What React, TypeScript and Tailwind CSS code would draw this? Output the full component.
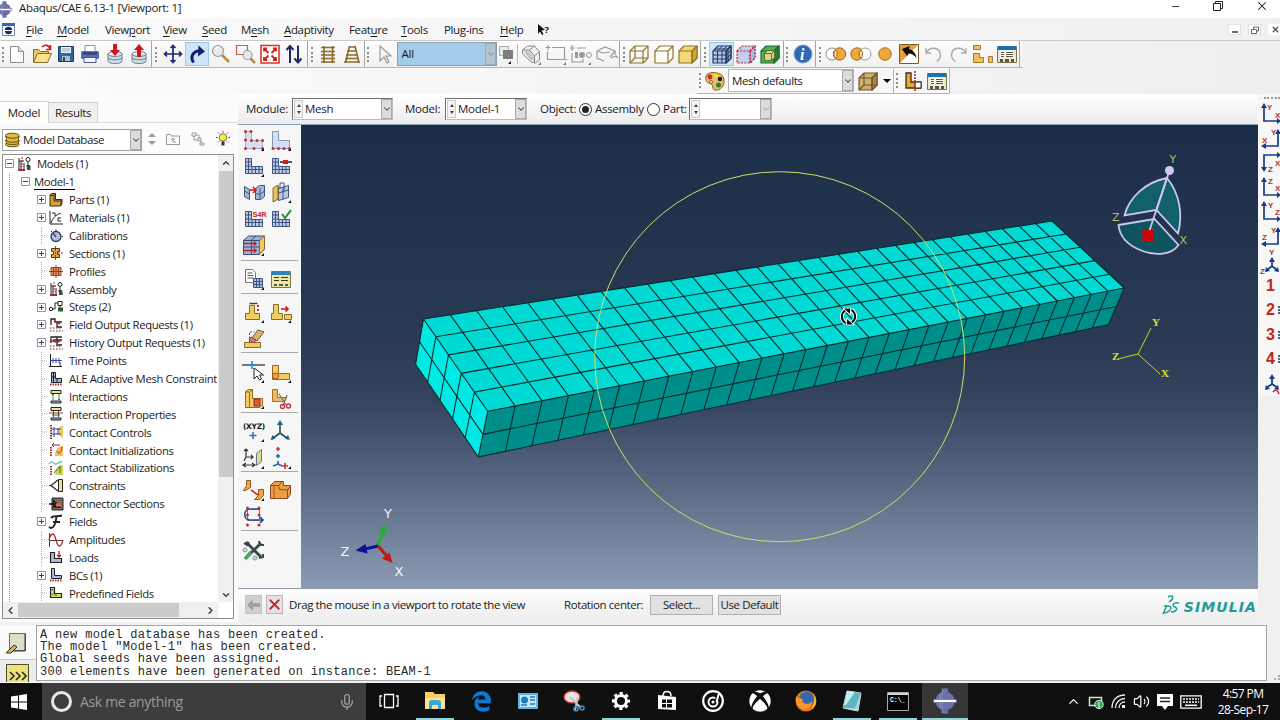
import { ChevronDown, ChevronLeft, ChevronRight, ChevronUp, Mic, Minus, Volume2, X } from "lucide-react";
import type { ReactNode } from "react";
import { FaEdgeLegacy, FaXbox } from "react-icons/fa";

interface IconProps {
  children: ReactNode;
  height?: number;
  width?: number;
}

const Icon: React.FC<IconProps> = ({ children, height = 24, width = 24 }) => (
  <svg className="shrink-0 overflow-visible" fill="none" height={height} viewBox={`0 0 ${width} ${height}`} width={width}>
    {children}
  </svg>
);

const Corner = () => <path d="M22 20v3h-3z" fill="#111" />;

interface CubeProps {
  fill?: string;
  inner?: boolean;
  side?: string;
  stroke: string;
  dash?: string;
}

const Cube: React.FC<CubeProps> = ({ dash, fill = "none", inner, side, stroke }) => (
  <g stroke={stroke} strokeDasharray={dash} strokeLinejoin="round" strokeWidth="1.2">
    <path d="M3 9l5-5h13v12l-5 5H3z" fill={fill} />
    {side && <path d="M16 9l5-5v12l-5 5z" fill={side} />}
    <path d="M3 9h13v12M16 9l5-5" />
    {inner && <path d="M8 4v12h13M8 16l-5 5" />}
  </g>
);

const TableIcon = () => (
  <>
    <path d="M2.500 4.500h19v16h-19z" fill="#efe9c4" stroke="#77744f" />
    <path d="M3 4h18v4H3z" fill="#1a70b0" />
    <path d="M5 8.500h14v7H5z" fill="#fbfaf0" />
    <path d="M6 10.500h3m2 0h7m-12 2h3m2 0h7m-12 2h3m2 0h7" stroke="#555" />
    <path d="M5 17h3v3H5zm5 0h4v3h-4zm6 0h3v3h-3z" fill="#555" />
  </>
);

const Disk: React.FC<{ up?: boolean }> = ({ up }) => (
  <>
    <path d="M5 12v7c0 3.500 14 3.500 14 0v-7z" fill="#cfdbe4" stroke="#6d8291" />
    <ellipse cx="12" cy="12" fill="#e3eaf0" rx="7" ry="2.500" stroke="#6d8291" />
    <path d="M5 15.500c0 3 14 3 14 0" stroke="#6d8291" />
    <path d={up ? "M12 2l5 6h-3v7h-4V8H7z" : "M10 2h4v6h3l-5 6-5-6h3z"} fill="#d2141e" />
  </>
);

const Bracket: React.FC<{ d: string }> = ({ d }) => <path d={d} stroke="#9a9a9a" strokeWidth="1.200" />;

const fileIcons: ReactNode[] = [
  <>
    <path d="M5.500 4.500h8l5 5v11h-13z" fill="#fdfdfd" stroke="#8b8b8b" />
    <path d="M13.500 4.500v5h5" fill="#e3e3e3" stroke="#8b8b8b" />
  </>,
  <>
    <path d="M3.500 20V7.500h5l2 2h8V12" fill="#e7c765" stroke="#8a6d25" />
    <path d="M3.500 20.500l4-9h14l-4 9z" fill="#fbe08f" stroke="#8a6d25" />
    <path d="M12 5c3-3 7-2 8 2M20.500 3v4.500H16" stroke="#cc2018" strokeWidth="1.700" />
  </>,
  <>
    <path d="M4.500 4.500h15v15h-15z" fill="#33659a" stroke="#1c3f66" />
    <path d="M7 5h10v6H7z" fill="#eef4f8" />
    <path d="M8 14h8v5H8z" fill="#aebfcb" />
    <path d="M9 15h2v4H9z" fill="#27486b" />
    <path d="M8 7h8M8 9h8" stroke="#90a6b8" />
  </>,
  <>
    <path d="M7 3.500h10V10H7z" fill="#fff" stroke="#8b93b0" />
    <rect fill="#5b6cac" height="8" rx="1.500" width="18" x="3" y="9" />
    <path d="M6 15.500h12v5H6z" fill="#f4f4fa" stroke="#4f5b8c" />
    <path d="M5 11.500h14" stroke="#2d3b74" strokeWidth="2" />
  </>,
  <Disk />,
  <Disk up />,
];

const viewIcons: ReactNode[] = [
  <path d="M12 3.500v17M3.500 12h17M9.500 6L12 3.500 14.500 6M9.500 18l2.500 2.500 2.500-2.500M6 9.500L3.500 12 6 14.500M18 9.500l2.500 2.500-2.500 2.500" stroke="#1c2a78" strokeWidth="1.700" />,
  <>
    <path d="M8.500 20.500C4.500 14 9 8.500 15 9" stroke="#14206a" strokeWidth="3" />
    <path d="M13.500 3.500l6.500 6-7 5z" fill="#14206a" />
  </>,
  <>
    <path d="M13 13l7 7" stroke="#b98a3d" strokeWidth="2.500" />
    <circle cx="9" cy="9" fill="#e9e9e9" r="5.500" stroke="#9a9a9a" strokeWidth="1.200" />
    <path d="M6 8c.5-1.800 2-2.500 3.500-2.500" stroke="#fff" strokeWidth="1.500" />
  </>,
  <>
    <path d="M2.500 3.500h11v9h-11z" stroke="#cf5a50" strokeWidth="1.200" />
    <path d="M16 16l5 5" stroke="#b98a3d" strokeWidth="2.500" />
    <circle cx="13.500" cy="13" fill="#e9e9e9" r="4.500" stroke="#9a9a9a" strokeWidth="1.200" />
  </>,
  <>
    <path d="M3 3.500h18v17.500H3z" fill="#fff" stroke="#d03a2c" strokeWidth="1.600" />
    <path d="M6 9.500V6.500H9M15 6.500h3v3M6 15v3H9M15 18h3v-3M6.500 7l4 4M17.500 7l-4 4M6.500 17.500l4-4M17.500 17.500l-4-4" stroke="#cc2418" strokeWidth="1.800" />
  </>,
  <path d="M8 21V4.500M4.500 8L8 4l3.500 4M16 3.500V20M12.500 16.500l3.500 4 3.500-4" stroke="#1c2a68" strokeWidth="2" />,
];

const ladderIcons: ReactNode[] = [
  <path d="M8 4v17M16.500 4v17M5 5.500h14M5 9.500h14M5 13h14M5 16.500h14M5 20h14" stroke="#8b6c2b" strokeWidth="1.700" />,
  <path d="M9.500 4L5.500 21M15 4l4 17M8.500 5h7.500M7 9h10M6 13h12M5 16.500h14M4 20h16" stroke="#8b6c2b" strokeWidth="1.600" />,
];

const selectIcons: ReactNode[] = [
  <>
    <path d="M3.500 8l5-4h7l5 6v8l-4 3-4-1-9-8z" fill="#f0f0f0" stroke="#888" />
    <path d="M3.500 8h7l5 6v7M10.500 8l5-4M15.500 14l5-4M6 10l7 8" stroke="#888" />
    <path d="M5 9h5l5 6v4z" fill="#c9c9c9" />
  </>,
  <Bracket d="M4 3v5M1.500 5.500h5M8 5.500h12.500v12H3.500v-8M18 17.500h5" />,
  <>
    <Bracket d="M3 3v6M1 6h5M8 6h9M3 11v9h11v-3" />
    <path d="M6 10h3v6H6zM10 13a3 3 0 106 0 3 3 0 10-6 0" fill="#9a9a9a" />
    <circle cx="20" cy="13" r="2.500" stroke="#9a9a9a" />
  </>,
  <Bracket d="M9 19l-7-3V9l8-4 10 4-5 6M20 9v4M2 9l6 2 7-1M16 16l5-2 2 2" />,
];

const renderIcons: ReactNode[] = [
  <Cube inner stroke="#92752e" />,
  <Cube fill="#fffdf7" stroke="#92752e" />,
  <Cube fill="#f5d775" side="#d8a726" stroke="#92752e" />,
];

const meshIcons: ReactNode[] = [
  <>
    <Cube fill="#b3c7e8" side="#8fa8d1" stroke="#28395f" />
    <path d="M7.500 9v12M12 9v12M3 13h13l5-5M3 17h13l5-5M7.500 9l5-5M12 9l5-5M5 7h13v12" stroke="#28395f" />
  </>,
  <Cube dash="2 1.300" fill="#c3cdec" side="#aab8df" stroke="#c22334" />,
  <>
    <Cube fill="#49b251" side="#267e31" stroke="#1f6b2b" />
    <path d="M6.500 11.500h7v7h-7zM6.500 11.500l3-3h7v7l-3 3" fill="#dfd489" stroke="#5b6d2d" />
    <path d="M13.500 11.500v7M13.500 11.500l3-3" stroke="#5b6d2d" />
  </>,
];

const displayIcons: ReactNode[] = [
  <>
    <circle cx="8" cy="12" fill="#fff" r="6" stroke="#888" />
    <circle cx="15.500" cy="12" fill="#eda73a" r="6.200" stroke="#9c6c1c" />
    <path d="M11.500 7.500a7 7 0 010 9 7 7 0 010-9" fill="#fbe5bd" stroke="#9c6c1c" />
  </>,
  <>
    <circle cx="8" cy="12" fill="#eda73a" r="6.200" stroke="#9c6c1c" />
    <circle cx="16" cy="12" fill="#fff" r="6" stroke="#999" />
    <path d="M12 7.500a7 7 0 010 9 7 7 0 010-9" fill="#fbe5bd" stroke="#9c6c1c" />
  </>,
  <circle cx="12" cy="12" fill="#eda73a" r="6.300" stroke="#a9741c" />,
  <>
    <path d="M2.500 2.500h19v19h-19z" fill="#fff" stroke="#7a5a1f" />
    <path d="M3 3h18L3 21z" fill="#e3a03a" />
    <path d="M5 7l7.500-3-.500 3c4 1 7 4.500 7.500 9-2.500-3-4.500-4.500-8-4.500L10 14z" fill="#080808" />
  </>,
  <path d="M4 6v5h5M4.500 10.500C8 4 18 5 18.500 13c0 3-1.500 5-4 6.500" stroke="#aaa" strokeWidth="1.400" />,
  <path d="M20 6v5h-5M19.500 10.500C16 4 6 5 5.500 13c0 3 1.500 5 4 6.500" stroke="#aaa" strokeWidth="1.400" />,
  <path d="M3.500 3.500h7v4h-7zM3.500 11.500h6v4h4v5h-10zM18.500 14.500h4v6h-4z" fill="#f2bd55" stroke="#a57a2b" />,
  <TableIcon />,
];

const Grip: React.FC<{ width: string }> = ({ width }) => (
  <div className={`flex h-full items-center justify-center ${width}`}>
    <div className="h-[15px] border-l-2 border-dotted border-[#8c8c8c]" />
  </div>
);

interface ToolGroupProps {
  active?: number;
  grip: string;
  icons: ReactNode[];
}

const ToolGroup: React.FC<ToolGroupProps> = ({ active, grip, icons }) => (
  <div className="flex h-full items-center border-r border-[#a6a6a6]">
    <Grip width={grip} />
    {icons.map((icon, i) => (
      <div
        className={`flex h-6 w-[24.4px] items-center justify-center ${active === i ? "border border-[#9bcbee] bg-[#cbe6f8]" : ""}`}
        key={i}
      >
        <Icon>{icon}</Icon>
      </div>
    ))}
  </div>
);

const ComboArrow: React.FC<{ muted?: boolean }> = ({ muted }) => (
  <div className="flex h-full w-[11px] shrink-0 items-center justify-center border border-[#a9a9a9] bg-[#dcdcdc]">
    <ChevronDown className={muted ? "shrink-0 text-[#aaa]" : "shrink-0 text-[#444]"} size={10} strokeWidth={2.5} />
  </div>
);

interface SpinComboProps {
  muted?: boolean;
  value: string;
  width: string;
}

const SpinCombo: React.FC<SpinComboProps> = ({ muted, value, width }) => (
  <div className={`flex h-[22px] items-center border border-[#6e6e6e] border-r-[#bbb] border-b-[#bbb] bg-white ${width}`}>
    <div className="ml-px flex h-[18px] w-[9px] flex-col items-center justify-between border border-[#ccc] bg-[#f3f3f3] py-[3px]">
      <div className="border-x-[2.5px] border-b-[3px] border-x-transparent border-b-[#444]" />
      <div className="border-x-[2.5px] border-t-[3px] border-x-transparent border-t-[#444]" />
    </div>
    <span className="grow pl-[2px]">{value}</span>
    <ComboArrow muted={muted} />
  </div>
);

const menus = [
  { label: "File", mark: 0, width: "w-[31px]" },
  { label: "Model", mark: 0, width: "w-[48px]" },
  { label: "Viewport", mark: 4, width: "w-[58px]" },
  { label: "View", mark: 0, width: "w-[39px]" },
  { label: "Seed", mark: 0, width: "w-[39px]" },
  { label: "Mesh", mark: 1, width: "w-[43px]" },
  { label: "Adaptivity", mark: 0, width: "w-[65px]" },
  { label: "Feature", mark: 4, width: "w-[52px]" },
  { label: "Tools", mark: 0, width: "w-[43px]" },
  { label: "Plug-ins", mark: -1, width: "w-[56px]" },
  { label: "Help", mark: 0, width: "w-[38px]" },
];

const AbaqusMark: React.FC<{ size: number }> = ({ size }) => (
  <svg fill="none" height={size} viewBox="0 0 24 24" width={size}>
    <path d="M9 1c0-1 6-1 6 0v3c3 1 5 3 5.500 6l2.500.500v3l-2.500.500c-.500 3-2.500 5-5.500 6v3c0 1-6 1-6 0v-3c-3-1-5-3-5.500-6L1 13.500v-3l2.500-.500C4 7 6 5 9 4z" fill="#6c70a8" />
    <path d="M9.500 1v22M8 5c-1 4-1 10 0 14" stroke="#8589bb" />
    <path d="M2 12h20" stroke="#fff" strokeWidth="2" />
  </svg>
);

const TitleBar = () => (
  <div className="flex h-[18px] items-start bg-white">
    <div className="-ml-1 pt-px">
      <AbaqusMark size={17} />
    </div>
    <span className="ml-[6px] leading-[15px] tracking-[-0.33px]">Abaqus/CAE 6.13-1 [Viewport: 1]</span>
    <div className="ml-auto flex items-start gap-[31px] pr-[11px]">
      <Minus className="mt-px" size={11} strokeWidth={1.8} />
      <Icon height={12} width={12}>
        <path d="M1.500 3.500h7v7h-7zM3.500 3V1.500h7v7H9" stroke="#222" />
      </Icon>
      <X className="-mt-px" size={14} strokeWidth={1.8} />
    </div>
  </div>
);

const MenuBar = () => (
  <div className="flex h-[23px] items-center border-b border-[#c9c9c9] bg-gradient-to-r from-[#fafafa] to-[#f0f0f0] pt-px">
    <div className="flex w-[26px] pl-[2px]">
      <Icon height={13} width={13}>
        <path d="M.500.500h12v12H.500z" fill="#fff" stroke="#6b8bb0" />
        <path d="M0 0h13v3H0z" fill="#2b6cb0" />
        <circle cx="6.500" cy="7.500" fill="#24246e" r="3.700" />
        <path d="M3 7.500h7" stroke="#fff" />
      </Icon>
    </div>
    {menus.map(({ label, mark, width }) => (
      <span className={`tracking-[-0.35px] ${width}`} key={label}>
        {mark < 0 ? label : label.slice(0, mark)}
        {mark >= 0 && <span className="underline underline-offset-2">{label[mark]}</span>}
        {mark >= 0 && label.slice(mark + 1)}
      </span>
    ))}
    <Icon height={14} width={14}>
      <path d="M0 1l7 6-3.500.500 2 3.500-1.500 1-2-3.500L0 11z" fill="#111" />
      <text fill="#111" fontFamily="Open Sans" fontSize="9.500" fontWeight="700" x="6.500" y="9.500">
        ?
      </text>
    </Icon>
    <div className="ml-auto flex items-center gap-[7px]">
      <div className="flex h-[11px] w-[13px] items-end justify-center border border-[#e2e2e2] bg-white pb-px">
        <div className="h-[2px] w-[6px] bg-[#5a6d80]" />
      </div>
      <div className="flex h-[11px] w-[13px] items-center justify-center border border-[#e2e2e2] bg-white">
        <Icon height={8} width={8}>
          <path d="M.500 3.500h5v4h-5zM2.500 3V1h5v4H6" stroke="#5a6d80" />
        </Icon>
      </div>
      <div className="flex h-[11px] w-[12px] items-center justify-end bg-white">
        <X className="text-[#4b5e70]" size={9} strokeWidth={4} />
      </div>
    </div>
  </div>
);

const ToolBars = () => (
  <div className="flex h-[53px] flex-col bg-gradient-to-r from-[#fbfbfb] to-[#efefef]">
    <div className="flex h-[27px] w-[1023px] items-center border-b border-[#b5b5b5] bg-gradient-to-b from-[#fdfdfd] to-[#f1f1f1]">
      <ToolGroup grip="w-[5px]" icons={fileIcons} />
      <ToolGroup active={1} grip="w-[8px]" icons={viewIcons} />
      <ToolGroup grip="w-[8px]" icons={ladderIcons} />
      <div className="flex h-full items-center border-r border-[#a6a6a6]">
        <Grip width="w-[6px]" />
        <div className="flex w-[26px] justify-center">
          <Icon>
            <path d="M8 4v15l4-4 3 6 2-1-3-6h5z" fill="#f4f4f4" stroke="#9a9a9a" strokeWidth="1.200" />
          </Icon>
        </div>
        <div className="flex h-6 w-[100px] items-center border border-[#8d9dac] bg-[#a5cbea] pl-[3px]">
          <span className="grow">All</span>
          <div className="flex h-full w-[11px] items-center justify-center border border-[#98aabb] bg-[#b3c3d0]">
            <ChevronDown className="shrink-0 text-[#8797a5]" size={10} strokeWidth={2.5} />
          </div>
        </div>
        <div className="flex w-[21px] justify-center border-r border-[#bbb]">
          <Icon height={20} width={18}>
            <path d="M1.500 2.500h9v9h-9z" fill="#ededed" stroke="#aaa" />
            <path d="M5 6h10v9H5z" fill="#7d7d7d" />
            <path d="M13 17v3h-3z" fill="#111" />
          </Icon>
        </div>
        {selectIcons.map((icon, i) => (
          <div className="flex w-[25.2px] justify-center" key={i}>
            <Icon>
              {icon}
              {i < 3 && <path d="M22 20v3h-3z" fill="#777" />}
            </Icon>
          </div>
        ))}
      </div>
      <ToolGroup grip="w-[7px]" icons={renderIcons} />
      <ToolGroup active={0} grip="w-[8px]" icons={meshIcons} />
      <ToolGroup
        grip="w-[7px]"
        icons={[
          <>
            <circle cx="12" cy="12" fill="#2f68b4" r="9" stroke="#7f9fc8" />
            <text fill="#fff" fontFamily="Liberation Serif" fontSize="16" fontStyle="italic" fontWeight="700" x="9" y="17.500">
              i
            </text>
          </>,
        ]}
      />
      <ToolGroup grip="w-[8px]" icons={displayIcons} />
    </div>
    <div className="ml-[697px] flex h-[26px] w-[253px] items-center border-r border-b border-[#b5b5b5] bg-[#f7f7f7]">
      <Grip width="w-[5px]" />
      <div className="flex w-[26px] justify-center">
        <Icon>
          <path d="M3 7c1-5 17-5 18 3 1 7-4 12-9 11-4-1-1-5-4-6-4-1-6-3-5-8z" fill="#e6bd6a" stroke="#866022" />
          <circle cx="7" cy="8" fill="#cf2a1d" r="2.400" />
          <circle cx="12.500" cy="6.500" fill="#f3e232" r="2" />
          <circle cx="17" cy="10" fill="#151515" r="2.200" />
          <circle cx="15.500" cy="16" fill="#26852b" r="2.500" />
          <circle cx="8" cy="13" fill="#fff" r="1.500" stroke="#866022" />
        </Icon>
      </div>
      <div className="flex h-[23px] w-[126px] items-center border border-[#b5b5b5] bg-white pl-[3px]">
        <span className="grow tracking-[-0.4px]">Mesh defaults</span>
        <ComboArrow />
      </div>
      <div className="flex w-[40px] items-center border-r border-[#b5b5b5] pl-[2px]">
        <Icon>
          <Cube fill="#ceb170" inner side="#ab8744" stroke="#6e5728" />
        </Icon>
        <div className="ml-[3px] border-x-[4px] border-t-[4px] border-x-transparent border-t-black" />
      </div>
      <Grip width="w-[6px]" />
      <div className="flex w-[25px] justify-center">
        <Icon>
          <path d="M5 4h5v9h10v6H5z" fill="#e9a936" stroke="#3e2d0f" strokeWidth="1.300" />
          <path d="M14 13h6v6h-6z" fill="#fff" stroke="#3e2d0f" />
          <path d="M14 2v21" stroke="#c5283b" strokeDasharray="2 1" strokeWidth="1.600" />
        </Icon>
      </div>
      <Icon>
        <TableIcon />
      </Icon>
    </div>
  </div>
);

// tree icons are drawn in a 14x14 box

const MiniL: React.FC<{ fill: string }> = ({ fill }) => (
  <path d="M1.500 1.500h4v6h7v4h-11z" fill={fill} stroke="#222" strokeWidth="1.200" />
);

const MiniRoller = () => (
  <>
    <path d="M2 1v12M2 4h5M4 4v9M7 6v7M9 9h4v4" stroke="#222" />
    <circle cx="11" cy="2.500" r="2" stroke="#222" />
    <path d="M1 13h7" stroke="#b3243a" strokeWidth="2" />
    <path d="M10 8h3v5h-3z" fill="#2f5a33" />
    <path d="M5 0v10" stroke="#b3243a" strokeDasharray="2 1" />
    <path d="M11 5v4" stroke="#222" />
  </>
);

const Hatch: React.FC<{ d: string }> = ({ d }) => <path d={d} stroke="#a8322f" strokeDasharray="1.500 1" strokeWidth="2" />;

interface TreeItem {
  box?: "plus" | "minus";
  icon?: ReactNode;
  label: string;
}

const treeItems: TreeItem[] = [
  {
    box: "plus",
    icon: (
      <>
        <path d="M1 2l2-1.500h3.500v6H13v4L11.500 13H1z" fill="#d9a13a" stroke="#3b2a0c" />
        <path d="M1 2.500h4V8h7v4.500M5 2.500l1.500-2M12 8l1-1.500" stroke="#3b2a0c" />
      </>
    ),
    label: "Parts (1)",
  },
  {
    box: "plus",
    icon: (
      <>
        <path d="M1 0v13h13M2 12C4 6 7 4 12 2M3 2h3v3" stroke="#222" />
        <path d="M12 7H9v3h3" stroke="#222" />
      </>
    ),
    label: "Materials (1)",
  },
  {
    icon: (
      <>
        <circle cx="7" cy="7.500" fill="#a9c3e6" r="5" stroke="#2c3f66" strokeWidth="1.300" />
        <path d="M7 8L4 4" stroke="#c2222b" strokeWidth="1.500" />
        <path d="M7 .500v2M13 7.500h1M2 2l1 1" stroke="#222" />
      </>
    ),
    label: "Calibrations",
  },
  {
    box: "plus",
    icon: (
      <>
        <path d="M2.500 2.500h8v3h-2v3h2v3h-8v-3h2v-3h-2z" fill="#e5a93d" stroke="#513a12" />
        <path d="M6.500 0v14M9 7h5" stroke="#c8292d" strokeDasharray="2 1" />
      </>
    ),
    label: "Sections (1)",
  },
  {
    icon: (
      <>
        <path d="M2 3.500h10v8H2z" fill="#e09a5a" stroke="#9b4a23" />
        <path d="M0 7.500h14M7 1v13M4.500 3v9M9.500 3v9" stroke="#9b3a23" />
      </>
    ),
    label: "Profiles",
  },
  { box: "plus", icon: <MiniRoller />, label: "Assembly" },
  {
    box: "plus",
    icon: (
      <>
        <circle cx="2" cy="9" r="1.700" stroke="#222" />
        <path d="M4 9h2V3h3M9 1.500h4v4H9zM11 6v4" stroke="#222" />
        <path d="M9 7.500h5v4H9z" fill="#2e5f34" />
      </>
    ),
    label: "Steps (2)",
  },
  {
    box: "plus",
    icon: (
      <>
        <path d="M2 7V1h4v3h7M8 4v5h5" stroke="#222" strokeWidth="1.300" />
        <path d="M5 3l6 3" stroke="#b5232b" strokeWidth="1.500" />
        <path d="M1 10h12M1 13h13" stroke="#722" strokeDasharray="1.500 1.500" />
      </>
    ),
    label: "Field Output Requests (1)",
  },
  {
    box: "plus",
    icon: (
      <>
        <path d="M2 7V1h11M8 1v8h5M4 4h9" stroke="#222" strokeWidth="1.300" />
        <path d="M1 6c3-4 6 4 11-2" stroke="#b5232b" strokeWidth="1.500" />
        <path d="M1 10h12M1 13h13" stroke="#722" strokeDasharray="1.500 1.500" />
      </>
    ),
    label: "History Output Requests (1)",
  },
  {
    icon: (
      <>
        <path d="M1.500 0v13M0 12.500h13M11 8v4" stroke="#222" />
        <path d="M1 6.500h12M4 4v5M7 4v5M10 4v5" stroke="#3a4aa0" />
      </>
    ),
    label: "Time Points",
  },
  {
    icon: (
      <>
        <path d="M2.500.500h4v6h6v4h-10z" fill="#9fb3d8" stroke="#222" />
        <path d="M2 5h5M4.500 1v9M8 7v4" stroke="#222" />
        <Hatch d="M1 12.500h12" />
      </>
    ),
    label: "ALE Adaptive Mesh Constraints",
  },
  {
    icon: (
      <>
        <path d="M2 .500h10v3H2z" fill="#f1e486" stroke="#222" />
        <path d="M2 11h10v2H2z" fill="#9fb3d8" stroke="#222" />
        <path d="M4 4v6M10 4v6M3 5l1-1 1 1M9 9l1 1 1-1" stroke="#2a8a4a" />
      </>
    ),
    label: "Interactions",
  },
  {
    icon: (
      <>
        <path d="M2 .500h10v3H2z" fill="#f1e486" stroke="#222" />
        <path d="M2 11h10v2H2z" fill="#9fb3d8" stroke="#222" />
        <path d="M4.500 4v6M9.500 4v6M3 8h8" stroke="#2a6a3a" />
        <path d="M0 6h14" stroke="#b5232b" />
      </>
    ),
    label: "Interaction Properties",
  },
  {
    icon: (
      <>
        <path d="M14 0c-6 1-6 12 0 13z" fill="#f0cd5a" />
        <Hatch d="M2 0v14" />
        <path d="M2 4h10M2 9h10M5 2v10M9 3v7" stroke="#3b3aa0" />
      </>
    ),
    label: "Contact Controls",
  },
  {
    icon: (
      <>
        <path d="M14 3c-7 0-8 7-8 10h8z" fill="#f0bd5a" />
        <Hatch d="M2 4v10" />
        <path d="M3 2h8M5 0L3 2l2 2M8 8c1 3 4 3 5-4" stroke="#b5232b" />
      </>
    ),
    label: "Contact Initializations",
  },
  {
    icon: (
      <>
        <path d="M14 4c-7 0-8 7-8 10h8z" fill="#d5cf58" />
        <Hatch d="M2 5v9" />
        <path d="M0 3c2-4 4-1 6 0s4-3 7-2" stroke="#2c9a8a" />
        <path d="M5 12c2-3 4-4 6-7v7" stroke="#2a7a2a" />
      </>
    ),
    label: "Contact Stabilizations",
  },
  {
    icon: (
      <>
        <path d="M9.500.500h4v12h-4z" fill="#f1e486" stroke="#222" />
        <path d="M9 1L2 6.500 9 12M0 6.500h3" stroke="#222" strokeWidth="1.200" />
      </>
    ),
    label: "Constraints",
  },
  {
    icon: (
      <>
        <path d="M3 1h11v12H3z" fill="#7b6a60" stroke="#222" />
        <path d="M0 7h5M5 3v7h7M7 5v4" stroke="#111" strokeWidth="1.500" />
        <path d="M7 6.500h5v3H7z" fill="#d8703a" />
      </>
    ),
    label: "Connector Sections",
  },
  {
    box: "plus",
    icon: (
      <path d="M2 3c2-3 6-1 11-2.500M7.500 1.500C7 6 6 13 2 13c-1 0-1.500-.500-1.500-1.500M4 7h7" stroke="#222" strokeWidth="1.900" />
    ),
    label: "Fields",
  },
  {
    icon: (
      <>
        <path d="M.500 0v14M0 7.500h14" stroke="#444" />
        <path d="M0 7C2-1 5-1 7 7s5 8 7 0" stroke="#b5232b" strokeWidth="1.300" />
      </>
    ),
    label: "Amplitudes",
  },
  {
    icon: (
      <>
        <MiniL fill="#a9bde0" />
        <path d="M10 0v6M8 4l2 2 2-2" stroke="#b5232b" strokeWidth="1.300" />
      </>
    ),
    label: "Loads",
  },
  {
    box: "plus",
    icon: (
      <>
        <path d="M2.500.500h3v7h7v3h-10z" fill="#a9bde0" stroke="#222" />
        <Hatch d="M1 12.500h12" />
      </>
    ),
    label: "BCs (1)",
  },
  {
    icon: (
      <>
        <MiniL fill="#d8e06a" />
        <path d="M3 3l2 3M3 8l6 2" stroke="#2c9a5a" strokeDasharray="2 1" strokeWidth="1.500" />
      </>
    ),
    label: "Predefined Fields",
  },
];

const ExpandBox: React.FC<{ kind: "plus" | "minus" }> = ({ kind }) => (
  <Icon height={9} width={9}>
    <path d="M.500.500h8v8h-8z" fill="#fff" stroke="#8c95a3" />
    <path d={kind === "plus" ? "M2 4.500h5M4.500 2v5" : "M2 4.500h5"} stroke="#36435a" />
  </Icon>
);

const ModelTree = () => (
  <div className="ml-[2px] flex h-[465px] w-[232px] flex-col border border-[#8f8f8f] bg-white">
    <div className="flex h-[447px]">
      <div className="w-[214px] overflow-hidden whitespace-nowrap text-[11.3px] tracking-[-0.36px] text-[#1c1c1c]">
        <div className="flex h-[17.9px] items-center">
          <div className="ml-[2px] mr-[3px]">
            <ExpandBox kind="minus" />
          </div>
          <Icon height={14} width={14}>
            <MiniRoller />
          </Icon>
          <span className="ml-[6px]">Models (1)</span>
        </div>
        <div className="ml-[6px] border-l border-dotted border-[#9a9a9a]">
          <div className="flex h-[17.9px] items-center">
            <div className="ml-[11px] mr-[4px]">
              <ExpandBox kind="minus" />
            </div>
            <span className="border-b border-black leading-[15px]">Model-1</span>
          </div>
          <div className="ml-[26.5px]">
            {treeItems.map(({ box, icon, label }) => (
              <div className="flex h-[17.9px] items-center" key={label}>
                <div className="flex h-full w-[12.5px] shrink-0 items-center">
                  {box ? (
                    <ExpandBox kind={box} />
                  ) : (
                    <Icon height={18} width={9}>
                      <path d="M4.500 0v18M5 9h5" stroke="#a8a8a8" strokeDasharray="1 1" />
                    </Icon>
                  )}
                </div>
                <Icon height={14} width={14}>
                  {icon}
                </Icon>
                <span className="ml-[6px]">{label}</span>
              </div>
            ))}
          </div>
        </div>
      </div>
      <div className="ml-auto flex w-[15px] flex-col items-center bg-[#f0f0f0] text-[#444]">
        <ChevronUp className="my-[3px] shrink-0" size={10} strokeWidth={3.5} />
        <div className="h-[306px] w-[14px] bg-[#cbcbcb]" />
        <ChevronDown className="mt-auto mb-[2px] shrink-0" size={10} strokeWidth={3.5} />
      </div>
    </div>
    <div className="flex h-[16px] w-[215px] items-center bg-[#f0f0f0] text-[#444]">
      <ChevronLeft className="mx-[2px] shrink-0" size={11} strokeWidth={3.5} />
      <div className="h-[14px] w-[161px] bg-[#cbcbcb]" />
      <ChevronRight className="ml-auto mr-[2px] shrink-0" size={11} strokeWidth={3.5} />
    </div>
  </div>
);

const LeftPanel = () => (
  <div className="flex w-[238px] flex-col bg-[#fbfbfb] pt-[7px]">
    <div className="flex h-[22px] items-end border-b border-[#dcdcdc]">
      <div className="-mb-px flex h-[22px] w-[49px] items-center justify-center border-r border-t border-[#d0d0d0] bg-[#fdfdfd] tracking-[-0.2px]">
        Model
      </div>
      <div className="flex h-[20px] w-[49px] items-center justify-center border-r border-t border-[#d0d0d0] bg-[#f0f0f0] tracking-[-0.35px]">
        Results
      </div>
    </div>
    <div className="flex h-[31px] items-center pl-[2px]">
      <div className="mt-[2px] flex h-[22px] w-[140px] items-center border border-[#a2a2a2] bg-white pl-px">
        <Icon height={16} width={17}>
          <path d="M1.500 3.500c0-3 13-3 13.500 0v2l-1 1.500 1 1v2l-1 1.500 1 1c0 3-13 3-13.500 0l1-2-1-1.500 1-2z" fill="#e3ba42" stroke="#5e4a14" />
          <path d="M2 4c1 3 12 3 13 0M2 8c1 3 12 3 13 0M2 11c2 2 11 2 13 0" stroke="#5e4a14" />
        </Icon>
        <span className="ml-[2px] grow tracking-[-0.45px]">Model Database</span>
        <ComboArrow />
      </div>
      <div className="ml-[6px] flex flex-col gap-[4px]">
        <div className="border-x-[4px] border-b-[4px] border-x-transparent border-b-[#999]" />
        <div className="border-x-[4px] border-t-[4px] border-x-transparent border-t-[#999]" />
      </div>
      <div className="ml-[10px] flex items-center gap-[11px]">
        <Icon height={12} width={14}>
          <path d="M.500 11.500V1.500h4l1 1.500h8v8.500zM7 9V5M5 7l2-2 2 2M7 9h3" stroke="#999" />
        </Icon>
        <Icon height={14} width={14}>
          <path d="M1 1h4v3H1zM5 3h3v4M7 6h3v3H7zM3 4v4h4M10 9v2M9 11h4v2H9z" stroke="#999" />
        </Icon>
        <Icon height={16} width={16}>
          <circle cx="7" cy="6.500" fill="#f5ec59" r="3.800" stroke="#7b7528" />
          <path d="M5.500 10.500h3v4h-3z" fill="#333" />
          <path d="M7 0v1.500M0 6.500h1.500M12.500 6.500H14M2 1.500l1 1M12 1.500l-1 1M2 11.500l1-1M12 11.500l-1-1" stroke="#333" />
        </Icon>
      </div>
    </div>
    <ModelTree />
  </div>
);

const ContextBar = () => (
  <div className="flex h-[31px] items-center border-b border-[#8da0b3] bg-gradient-to-b from-white to-[#ececec] pl-2 tracking-[-0.25px]">
    <span className="w-[46px]">Module:</span>
    <SpinCombo value="Mesh" width="w-[101px]" />
    <span className="ml-[12px] w-[40px]">Model:</span>
    <SpinCombo value="Model-1" width="w-[82px]" />
    <span className="ml-[13px] w-[39px]">Object:</span>
    <div className="flex h-[13px] w-[13px] items-center justify-center rounded-full border border-[#333] bg-white">
      <div className="h-[7px] w-[7px] rounded-full bg-[#222]" />
    </div>
    <span className="ml-[3px] w-[52px] tracking-[-0.3px]">Assembly</span>
    <div className="h-[13px] w-[13px] rounded-full border border-[#333] bg-white" />
    <span className="ml-[3px] w-[26px]">Part:</span>
    <SpinCombo muted value="" width="w-[83px]" />
  </div>
);

// toolbox icons, two columns per section

const BigL: React.FC<{ grid?: boolean; fill?: string }> = ({ fill = "#b9c9e6", grid }) => (
  <>
    <path d="M3.500 4.500h6v8h11v7h-17z" fill={fill} stroke="#3f557f" />
    {grid && <path d="M6.500 5v14M3.500 8h6M3.500 12h6M3.500 15.500h17M10 12.500v7M13.500 12.500v7M17 12.500v7" stroke="#3f557f" />}
  </>
);

const YellowL = () => <path d="M3.500 5.500h6v8h11v6h-17z" fill="#f2cc60" stroke="#8b6a22" />;

const Base: React.FC<{ x?: number }> = ({ x = 0 }) => (
  <path d={`M${x + 3.5} 13.500h4v-8h5v8h5v6h-14z`} fill="#f2cc60" stroke="#8b6a22" />
);

const Dots: React.FC<{ points: number[][] }> = ({ points }) => (
  <>
    {points.map(([x, y]) => (
      <circle cx={x} cy={y} fill="#cc2a28" key={`${x}-${y}`} r="1.500" />
    ))}
  </>
);

const toolSections: { className: string; icons: ReactNode[] }[] = [
  {
    className: "h-[136px]",
    icons: [
      <>
        <path d="M3.500 3.500h6v9h11v8h-17z" fill="#d4e0f1" stroke="#9fb0cc" />
        <Dots points={[[3.5, 3.5], [9, 3.5], [3.5, 12], [3.5, 20.5], [9.5, 12.5], [15, 12.5], [20.5, 12.5], [12, 20.5], [20.5, 20.5]]} />
        <Corner />
      </>,
      <>
        <path d="M3.500 3.500h6v9h11v8h-17z" fill="#d4e0f1" stroke="#8296b8" />
        <Dots points={[[4, 20.5], [9.5, 20.5], [15, 20.5], [20.5, 20.5]]} />
        <Corner />
      </>,
      <>
        <BigL grid />
        <Corner />
      </>,
      <>
        <BigL grid />
        <path d="M11 8h12" stroke="#222" strokeWidth="1.500" />
        <path d="M14 6h5v4h-5z" fill="#cc2018" />
      </>,
      <>
        <path d="M2.500 6.500l5 3v10l-5-3z" fill="#a4b7d8" stroke="#3f557f" />
        <path d="M13.500 8.500l4-3h5v11l-4 3h-5z" fill="#a4b7d8" stroke="#3f557f" />
        <path d="M13.500 14h5l4-3M18 8.500v11M2.500 11l5 3" stroke="#3f557f" />
        <path d="M8 10h6M11 7l3 3-3 3" stroke="#cc2018" strokeWidth="1.500" />
      </>,
      <>
        <path d="M4.500 9.500l5-3v12l-5 3zM9.500 8.500l10-3v12l-10 3z" fill="#b9c9e6" stroke="#3f557f" />
        <path d="M4 8l5-3v14l-5 3z" fill="#e9c25a" stroke="#8b6a22" />
        <path d="M14 7v12M9.500 13l10-3M11 9V3h4v8" stroke="#3f557f" />
        <Corner />
      </>,
      <>
        <BigL grid />
        <text fill="#c22a28" fontFamily="Liberation Sans" fontSize="7.500" fontWeight="700" x="10.500" y="10">
          S4R
        </text>
      </>,
      <>
        <BigL grid />
        <path d="M13 7l3 4 6-8" stroke="#239030" strokeWidth="2" />
      </>,
      <>
        <path d="M1.500 7.500l5-4.500h16v13l-5 5.500h-16z" fill="#9fb3da" stroke="#3a4a78" />
        <path d="M17.500 7.500l5-4.500v13l-5 5.500z" fill="#f0cc60" stroke="#8b6a22" />
        <path d="M1.500 7.500h16M1.500 14h16M9.500 7.500v14M14 3l-5 4.500" stroke="#3a4a78" />
        <path d="M2 10.500h12M2 17.500h12M12 8.500l2 2-2 2M12 15.500l2 2-2 2" stroke="#bf2030" strokeWidth="1.400" />
        <Corner />
      </>,
    ],
  },
  {
    className: "h-[33px] pt-[5px]",
    icons: [
      <>
        <path d="M3.500 2.500h7l3 3v10h-10z" fill="#fff" stroke="#777" />
        <path d="M5.500 6h5M5.500 8.500h6M5.500 11h6" stroke="#555" />
        <path d="M11.500 11.500h9v9h-9z" fill="#a9bce0" stroke="#3f557f" />
        <path d="M14.500 11.500v9M17.500 11.500v9M11.500 14.500h9M11.500 17.500h9" stroke="#3f557f" />
        <Corner />
      </>,
      <>
        <path d="M2.500 4.500h19v16h-19z" fill="#f0e6a0" stroke="#77744f" />
        <path d="M3 4h18v4H3z" fill="#2b83b8" />
        <path d="M5 10.500h5m2 0h7m-14 3h5m2 0h7" stroke="#333" />
        <path d="M5 17h3v2H5zm5 0h4v2h-4zm6 0h3v2h-3z" fill="#555" />
      </>,
    ],
  },
  {
    className: "h-[59px] pt-[5px]",
    icons: [
      <>
        <Base />
        <path d="M7.500 3.500h8" stroke="#8b2a22" strokeWidth="1.500" />
        <path d="M16 5v8" stroke="#cc2a28" strokeDasharray="2 2" strokeWidth="2" />
        <Corner />
      </>,
      <>
        <path d="M2.500 13.500h2v-9h5v9h4v6h-11zM15.500 14.500h7v5h-7z" fill="#f2cc60" stroke="#8b6a22" />
        <path d="M12 9h7M16.500 6.500L19 9l-2.500 2.500" stroke="#cc2018" strokeWidth="1.700" />
        <Corner />
      </>,
      <>
        <path d="M2.500 15.500h16v5h-16z" fill="#f2cc60" stroke="#8b6a22" />
        <path d="M7.500 15V5h5" stroke="#555" strokeDasharray="2 1.500" />
        <path d="M10 11l6-8 6 2-7 9z" fill="#dcb56a" stroke="#6a5a3a" />
        <path d="M9 10l5 3-2 3-5-3z" fill="#d78282" stroke="#8a3a3a" />
      </>,
    ],
  },
  {
    className: "h-[60px] pt-[5px]",
    icons: [
      <>
        <path d="M0 5h23" stroke="#333" strokeWidth="1.300" />
        <path d="M10 1v8M6 5h8" stroke="#2a8ad0" strokeWidth="1.600" />
        <path d="M12 8v11l3-3 2.500 4 2-1-2-4h4z" fill="#fff" stroke="#222" />
        <Corner />
      </>,
      <>
        <YellowL />
        <circle cx="6.500" cy="16" fill="#f0a040" r="3" stroke="#b5432a" />
        <Corner />
      </>,
      <>
        <path d="M3.500 5.500l3-2h4v9h10v7l-3 2h-14z" fill="#f2cc60" stroke="#8b6a22" />
        <path d="M12 13h6v7h-6z" fill="#dd5a3a" stroke="#8b2a22" />
        <path d="M7.500 6v15M3.500 6h4l3-2" stroke="#8b6a22" />
        <Corner />
      </>,
      <>
        <path d="M3.500 3.500h5v8h9l-2 4h-12z" fill="#f0b860" stroke="#a5702a" />
        <path d="M10 8l7 11M18 9l-4 11" stroke="#777" strokeWidth="1.300" />
        <circle cx="13.500" cy="20.500" r="2" stroke="#c2383a" strokeWidth="1.400" />
        <circle cx="19.500" cy="20" r="2" stroke="#c2383a" strokeWidth="1.400" />
      </>,
    ],
  },
  {
    className: "h-[59px] pt-[5px]",
    icons: [
      <>
        <text fill="#222" fontFamily="DejaVu Sans" fontSize="7.500" fontWeight="700" textLength="22" x="1" y="10">
          (XYZ)
        </text>
        <path d="M11 13v7M7.500 16.500h7" stroke="#2a7ac0" strokeWidth="1.600" />
        <Corner />
      </>,
      <>
        <path d="M11 3v11M11 14l-8 6M11 14l8 6" stroke="#26506e" strokeWidth="1.700" />
        <path d="M11 1l3 5H8zM1.500 21l2-5 3 3.500zM21 21l-5-1.500 3-3.500z" fill="#1e5e86" />
      </>,
      <>
        <path d="M4 3v8h7M4 11l-2 4M1 19h12M4 17l-3 2 3 2M10 17l3 2-3 2M2 5l2-2 2 2M9 9l2 2-2 2" stroke="#333" strokeWidth="1.200" />
        <path d="M14.500 7.500l5-4v12l-5 4z" fill="#ead98a" stroke="#5a7a9a" />
        <Corner />
      </>,
      <>
        <path d="M9 1v4M7 3h4M16 17v6M13 20h6" stroke="#cc3a38" strokeWidth="1.700" />
        <path d="M9 8v4M7 10h4M9 15v4M9 18l-5 2M9 18l4 2" stroke="#2a6ab0" strokeWidth="1.700" />
        <Corner />
      </>,
    ],
  },
  {
    className: "h-[59px] pt-[5px]",
    icons: [
      <>
        <path d="M4.500 2.500h4v7l-5 3h-2l3-5zM16.500 11.500h5v6l-4 4h-5l4-4z" fill="#f0a845" stroke="#8b5a22" />
        <path d="M9 12l7 5" stroke="#cc2a28" strokeWidth="1.600" />
        <Corner />
      </>,
      <>
        <path d="M1.500 7.500l4-4h9v4h7v9l-3 4h-17z" fill="#e9a045" stroke="#8b4a22" />
        <path d="M1.500 7.500h8l1 4 8 .500v8M9.500 7.500l4-4M18.500 12l3-4" stroke="#8b4a22" />
        <path d="M5 8v12" stroke="#c8452a" />
      </>,
      <>
        <path d="M5.500 4.500h12v11h-12z" stroke="#777" />
        <path d="M18 4H8C1 4 1 15 8 15h13M18 12l3 3-3 3" stroke="#24509a" strokeWidth="1.700" />
        <Dots points={[[5.5, 3], [17, 3], [5.5, 10], [17, 10], [5.5, 20], [17, 20]]} />
      </>,
    ],
  },
  {
    className: "h-[56px] border-b-0 pt-[6px] content-start",
    icons: [
      <>
        <path d="M4 4l15 15M19 5L4 20" stroke="#3d464a" strokeWidth="3" />
        <path d="M9 14l-6 7" stroke="#4ea26c" strokeWidth="3.500" />
        <path d="M2 5l3 2 2-3M17 3l1 4 4 0M17 20l4-1 0-3" stroke="#3d464a" strokeWidth="2" />
        <circle cx="3" cy="12" fill="#ccd6de" r="2" stroke="#8794a0" />
        <circle cx="13" cy="20" fill="#ccd6de" r="2" stroke="#8794a0" />
      </>,
    ],
  },
];

const ToolBox = () => (
  <div className="w-[63px] bg-[#f6f6f6] pl-[3px]">
    {toolSections.map(({ className, icons }, i) => (
      <div className={`grid w-[57px] grid-cols-[26px_27px] content-center border-b border-[#a8a8a8] ${className}`} key={i}>
        {icons.map((icon, j) => (
          <div className="flex h-[26.4px] items-center justify-center" key={j}>
            <Icon>{icon}</Icon>
          </div>
        ))}
      </div>
    ))}
  </div>
);

// Perspective projection of the meshed beam. Each corner is [x, y, depth weight].

type Corner3 = [number, number, number];

const near: Corner3 = [186.7, 286.3, 1];
const back: Corner3 = [122.5, 194, 1.048];
const far: Corner3 = [823.3, 163, 1.307];
const below: Corner3 = [177.3, 332, 1.018];

const LENGTH = 30;
const WIDTH = 5;
const HEIGHT = 2;

const project = (l: number, w: number, h: number) => {
  const mix = (pick: (c: Corner3) => number) =>
    pick(near) + (l / LENGTH) * (pick(far) - pick(near)) + (w / WIDTH) * (pick(back) - pick(near)) + (h / HEIGHT) * (pick(below) - pick(near));
  const depth = mix((c) => c[2]);
  return `${(mix((c) => c[0] * c[2]) / depth).toFixed(2)} ${(mix((c) => c[1] * c[2]) / depth).toFixed(2)}`;
};

const face = (points: number[][]) => `M${points.map(([l, w, h]) => project(l, w, h)).join("L")}Z`;
const line = (a: number[], b: number[]) => `M${project(a[0], a[1], a[2])}L${project(b[0], b[1], b[2])}`;
const range = (n: number) => Array.from({ length: n + 1 }, (_, i) => i);

const gridLines = [
  ...range(LENGTH).map((l) => line([l, 0, 0], [l, WIDTH, 0]) + line([l, 0, 0], [l, 0, HEIGHT])),
  ...range(WIDTH).map((w) => line([0, w, 0], [LENGTH, w, 0]) + line([0, w, 0], [0, w, HEIGHT])),
  ...range(HEIGHT).map((h) => line([0, 0, h], [LENGTH, 0, h]) + line([0, 0, h], [0, WIDTH, h])),
].join("");

const Viewport = () => (
  <div className="h-[463px] w-[957px] bg-[linear-gradient(180deg,#1b2e48_0%,#22344e_25%,#2b3b54_48%,#35455f_60%,#53637d_75%,#8090a9_95%,#8c9bb4_100%)]">
    <svg className="block" fill="none" height="463" viewBox="0 0 957 463" width="957">
      <path d={face([[0, 0, 0], [LENGTH, 0, 0], [LENGTH, WIDTH, 0], [0, WIDTH, 0]])} fill="#00d9d4" />
      <path d={face([[0, 0, 0], [LENGTH, 0, 0], [LENGTH, 0, HEIGHT], [0, 0, HEIGHT]])} fill="#008e8a" />
      <path d={face([[0, 0, 0], [0, WIDTH, 0], [0, WIDTH, HEIGHT], [0, 0, HEIGHT]])} fill="#00eae5" />
      <path d={gridLines} stroke="#062b2c" strokeWidth="1.100" />
      <circle cx="478.700" cy="231.700" r="185" stroke="#d3dc6b" />

      <g stroke="#fff" strokeLinejoin="round" strokeWidth="1.600">
        <path d="M544.500 198a7.500 7.500 0 01-.500-12.500M550.500 185a7.500 7.500 0 01.500 12.500" strokeWidth="3.800" />
        <path d="M542.500 183.500h6.500v6zM552.500 199.500H546v-6z" />
      </g>
      <path d="M544.500 198a7.500 7.500 0 01-.500-12.500M550.500 185a7.500 7.500 0 01.500 12.500" stroke="#0a0a0a" strokeWidth="2" />
      <path d="M543 183.500h6v5.500zM552 199.500h-6v-5.500z" fill="#0a0a0a" />

      <g fill="#12606b" stroke="#cfc6f2" strokeWidth="1.800">
        <path d="M866 53C845 57 828 72 823.500 90.500l32-5.500z" />
        <path d="M866 53c13 16 16 37 11 55.500L855.500 85z" />
        <path d="M817.500 100l36-6 24 26c-7 10-23 11-36 6-16-6-23-15-24-26z" fill="#10535f" />
        <path d="M868 47l-20 60" />
      </g>
      <circle cx="868.500" cy="45.500" fill="#cfc6f2" r="4.500" />
      <path d="M841.500 105h11v11h-11z" fill="#cc0605" />
      <g fill="#b9bf66" fontFamily="DejaVu Sans" fontSize="11">
        <text x="868.500" y="38">Y</text>
        <text x="811" y="95.500">Z</text>
        <text x="878.500" y="119">X</text>
      </g>

      <path d="M837 229l13-26M837 229l-20 5M837 229l22 20" stroke="#cdd22d" />
      <g fill="#dbe03a" fontFamily="Liberation Serif" fontSize="11" fontWeight="700">
        <text x="851" y="201">Y</text>
        <text x="811" y="235">Z</text>
        <text x="860" y="252">X</text>
      </g>

      <path d="M76 421l6-13" stroke="#1db32c" strokeWidth="3" />
      <path d="M84.500 399l1.500 11-9-3.500z" fill="#1db32c" />
      <path d="M77 421l-13 3" stroke="#0c1390" strokeWidth="3" />
      <path d="M54.500 425.500l10-6.500 2 9.500z" fill="#0c1390" />
      <path d="M77 421l9 10" stroke="#c41414" strokeWidth="3" />
      <path d="M91.500 438l-10.500-4.500 7.500-6z" fill="#c41414" />
      <g fill="#f4f4f4" fontFamily="DejaVu Sans" fontSize="13">
        <text x="83" y="393">Y</text>
        <text x="39.500" y="431">Z</text>
        <text x="93.500" y="450.500">X</text>
      </g>
    </svg>
  </div>
);

const PromptBar = () => (
  <div className="flex h-[33px] items-center border-t border-[#8e99a8] bg-gradient-to-b from-[#fdfdfd] to-[#ededed] pb-px pl-[7px] tracking-[-0.41px]">
    <div className="flex h-[19px] w-[17px] items-center justify-center border border-[#c4c4c4] bg-[#d0d0d0]">
      <Icon height={14} width={15}>
        <path d="M1 7l6-6v4h7v4H7v4z" fill="#a2a2a2" />
      </Icon>
    </div>
    <div className="ml-[4px] flex h-[19px] w-[17px] items-center justify-center border border-[#b9b9b9] bg-[#e2e2e2]">
      <X className="shrink-0 text-[#d1202b]" size={17} strokeWidth={2.5} />
    </div>
    <span className="ml-[6px] w-[275px]">Drag the mouse in a viewport to rotate the view</span>
    <span className="w-[86px]">Rotation center:</span>
    <button className="h-[20px] w-[63px] border border-[#b0b0b0] bg-[#e1e1e1] leading-[17px]">Select...</button>
    <button className="ml-[5px] h-[20px] w-[63px] border border-[#b0b0b0] bg-[#e1e1e1] leading-[17px]">Use Default</button>
    <div className="ml-auto flex items-center pr-[1px] text-[#1e9b96]">
      <Icon height={22} width={22}>
        <path d="M8 3c5-3 7 1 1 5M3 20L7 11M4 12h5c4 1 1 7-6 7M19 9c-7-1-7 3-4 4s2 5-4 5" stroke="#1e9b96" strokeWidth="1.500" />
      </Icon>
      <span className="ml-[2px] mt-[5px] font-['DejaVu_Sans'] text-[14px] font-bold italic leading-none tracking-[1.1px]">SIMULIA</span>
    </div>
  </div>
);

interface AxisView {
  lines: string;
  heads: string;
  labels: [string, number, number][];
}

const axisViews: AxisView[] = [
  { heads: "M4 2l3 5H1zM21 20l-4-3v6z", labels: [["Y", 7, 9], ["X", 15, 17]], lines: "M4 6v14h15" },
  { heads: "M18 3l3 5h-6zM1 20l5-3v6z", labels: [["X", 2, 17], ["Y", 11, 9]], lines: "M18 6v14H5" },
  { heads: "M4 22l3-5H1zM21 5l-4-3v6z", labels: [["Z", 8, 22], ["X", 15, 16]], lines: "M4 18V5h14" },
  { heads: "M4 2l3 5H1zM21 20l-4-3v6z", labels: [["Z", 8, 9], ["X", 15, 16]], lines: "M4 6v14h15" },
  { heads: "M4 2l3 5H1zM21 20l-4-3v6z", labels: [["Y", 8, 9], ["Z", 15, 16]], lines: "M4 6v14h15" },
  { heads: "M18 3l3 5h-6zM1 20l5-3v6z", labels: [["Z", 2, 16], ["Y", 11, 9]], lines: "M18 6v14H5" },
  { heads: "M12 9l3 5H9zM5 24l1-5 4 4zM19 24l-5-1 4-4z", labels: [["Y", 9, 7], ["Z", 0, 26]], lines: "M12 11v7l-6 5M12 18l6 5" },
];

const Triad = () => (
  <>
    <path d="M12 5v8l-6 4M12 13l6 4" stroke="#153c8a" strokeWidth="1.800" />
    <path d="M12 3l3 5H9zM5 19l1-5 4 4zM19 19l-5-1 4-4z" fill="#153c8a" />
    <path d="M13 21c2-3 5-2 6 2" stroke="#c2251c" strokeWidth="1.500" />
  </>
);

const ViewsStrip = () => (
  <div className="h-[302px] w-[22px] overflow-hidden bg-[#f7f7f7] pl-[2px]">
    <div className="mt-[3px] mb-[2px] ml-[4px] h-[2px] border-t-2 border-dotted border-[#999]" />
    {axisViews.map(({ heads, labels, lines }, i) => (
      <Icon height={24.5} key={i} width={20}>
        <path d={lines} stroke="#153c8a" strokeWidth="1.700" />
        <path d={heads} fill="#153c8a" />
        {labels.map(([label, x, y]) => (
          <text fill="#b5352a" fontFamily="Liberation Sans" fontSize="8" fontWeight="700" key={label} x={x} y={y}>
            {label}
          </text>
        ))}
      </Icon>
    ))}
    {["1", "2", "3", "4"].map((n) => (
      <div className="flex h-[24.5px] items-center pt-[2px] pl-[6px] font-['Liberation_Sans'] text-[16px] font-bold text-[#c2251c]" key={n}>
        {n}
        {n !== "1" && <span className="ml-[2px] h-[8px] w-[4px] border-r-2 border-dotted border-[#55606a]" />}
      </div>
    ))}
    <Icon height={24.5} width={20}>
      <Triad />
    </Icon>
  </div>
);

const messages = [
  "A new model database has been created.",
  'The model "Model-1" has been created.',
  "Global seeds have been assigned.",
  "300 elements have been generated on instance: BEAM-1",
];

const MessageArea = () => (
  <div className="flex h-[61px] bg-[#f1f1f1] pt-[3px]">
    <div className="flex w-[36px] flex-col bg-[#fafafa]">
      <div className="flex h-[35px] items-center border-b border-[#c8c8c8] pl-[5px]">
        <Icon height={24} width={22}>
          <path d="M4.500 3.500h16v17h-16z" fill="#dedfc9" stroke="#6c6c63" />
          <path d="M1 23l8-8 3 2-6 6z" fill="#cbb659" stroke="#3d3619" />
          <path d="M20 4v17H8" stroke="#333" />
        </Icon>
      </div>
      <div className="flex h-[22px] items-end overflow-hidden bg-[#ececec] pl-[6px]">
        <Icon height={18} width={24}>
          <path d="M.500.500h22v19h-22z" fill="#ece27a" stroke="#4d4a2a" />
          <path d="M4 8l4 4-4 4M10 8l4 4-4 4M16 8l4 4-4 4" stroke="#222" strokeWidth="1.500" />
        </Icon>
      </div>
    </div>
    <div className="h-[56px] w-[1231px] border border-[#a3a3a3] bg-white pt-[3px] pl-[3px] font-['Liberation_Mono'] text-[12px] leading-[12.2px] tracking-[0.32px] text-[#2a2a2a]">
      {messages.map((message) => (
        <p key={message}>{message}</p>
      ))}
    </div>
    <div className="flex grow items-end justify-end pb-[3px]">
      <div className="h-[5px] w-[6px] border-r-2 border-b-2 border-dotted border-[#aaa]" />
    </div>
  </div>
);

const taskIcons: { active?: boolean; icon: ReactNode; open?: boolean }[] = [
  {
    icon: (
      <Icon>
        <path d="M7.500 5.500h9v13h-9z" stroke="#fff" strokeWidth="1.300" />
        <path d="M5 7H3v10h2M19 7h2v10h-2" stroke="#fff" strokeWidth="1.300" />
      </Icon>
    ),
  },
  {
    icon: (
      <Icon>
        <path d="M2 3h8l2 2h10v15H2z" fill="#f5cf62" />
        <path d="M2 9h20v11H2z" fill="#fbe190" />
        <path d="M6 20v-6c0-2 1-3 3-3h6c2 0 3 1 3 3v6h-3v-4H9v4z" fill="#37a9d6" />
      </Icon>
    ),
    open: true,
  },
  { icon: <FaEdgeLegacy className="text-[#0f78d4]" size={21} /> },
  {
    icon: (
      <Icon>
        <path d="M2 4h20v16H2z" fill="#57b8ea" />
        <path d="M4 6h16v12H4z" fill="#c6e9fa" />
        <circle cx="8.500" cy="11" fill="#2279b8" r="3.500" />
        <path d="M14 8h5M14 11h5M5 16h6M14 15h5" stroke="#2279b8" strokeWidth="1.500" />
      </Icon>
    ),
  },
  {
    icon: (
      <Icon>
        <ellipse cx="10" cy="8" fill="#e8e4e2" rx="8" ry="6" stroke="#c2362b" strokeWidth="1.500" />
        <path d="M8 8l11 11M16 8l-3 13" stroke="#bcc5cc" strokeWidth="2" />
        <circle cx="14" cy="20" r="2" stroke="#4a87bc" strokeWidth="1.600" />
        <circle cx="20" cy="19" r="2" stroke="#4a87bc" strokeWidth="1.600" />
      </Icon>
    ),
  },
  {
    icon: (
      <Icon>
        <circle cx="12" cy="12" r="5.500" stroke="#fff" strokeWidth="3" />
        <circle cx="12" cy="12" r="7.800" stroke="#fff" strokeDasharray="3.200 2.926" strokeDashoffset="1.600" strokeWidth="2.600" />
      </Icon>
    ),
    open: true,
  },
  {
    icon: (
      <Icon>
        <path d="M3 6l18 2v13l-18-1z" fill="#fff" />
        <path d="M8 7c0-6 8-6 8 0" stroke="#fff" strokeWidth="1.500" />
        <path d="M7 10.500h4v3.500H7zM12 10.500h5v3.500h-5zM7 15h4v3.500H7zM12 15h5v3.500h-5z" fill="#111" />
      </Icon>
    ),
  },
  {
    icon: (
      <Icon>
        <circle cx="12" cy="12" r="9.800" stroke="#fff" strokeWidth="2.200" />
        <circle cx="12" cy="13" r="4.500" stroke="#fff" strokeWidth="2" />
        <circle cx="12" cy="13" fill="#fff" r="1.500" />
        <path d="M16 12l1-8" stroke="#0f0f0f" strokeWidth="4" />
        <path d="M15.500 13L18 4l3 3" stroke="#fff" strokeWidth="2" />
      </Icon>
    ),
  },
  { icon: <FaXbox className="text-white" size={22} /> },
  {
    icon: (
      <Icon>
        <circle cx="12" cy="12" fill="#e8711c" r="10.500" />
        <circle cx="12.500" cy="10" fill="#3667b0" r="7.500" />
        <path d="M2 7c2 3 3 1 6 3 2 2-1 3 2 4 3 2 6 1 8-2 0 6-5 9-9 8-5-1-8-6-7-13z" fill="#f5982a" />
        <path d="M20 5c3 5 3 12-3 16 3-5 4-10 3-16z" fill="#f7c530" />
      </Icon>
    ),
  },
  {
    icon: (
      <Icon>
        <path d="M7 2l14 2-3 18-15-3z" fill="#9adbe0" stroke="#d8dede" />
        <path d="M7 2l14 2-6 15-12 0z" fill="#5fb5bf" />
        <path d="M7 2l8 1-9 13H4z" fill="#c2edf0" />
      </Icon>
    ),
    open: true,
  },
  {
    icon: (
      <Icon>
        <path d="M1.500 3.500h21v18h-21z" fill="#050505" stroke="#aaa" />
        <path d="M2 4h20v2H2z" fill="#d5d5d5" />
        <text fill="#eee" fontFamily="Liberation Mono" fontSize="6.500" fontWeight="700" x="4" y="13">
          C:\_
        </text>
      </Icon>
    ),
    open: true,
  },
  { active: true, icon: <AbaqusMark size={26} />, open: true },
];

const TaskBar = () => (
  <div className="flex h-[37px] bg-[#0f0f0f] text-white">
    <div className="flex w-[42px] items-center justify-center pr-1">
      <Icon height={16} width={16}>
        <path d="M0 2.500L7 1.500v6H0zM8 1.300L16 0v7.500H8zM0 8.500h7v6l-7-1zM8 8.500h8V16l-8-1.300z" fill="#fff" />
      </Icon>
    </div>
    <div className="flex w-[324px] items-center bg-[#3d3d3d] pl-[9px]">
      <div className="h-[21px] w-[21px] rounded-full border-[3px] border-[#e6e6e6]" />
      <span className="ml-[8px] text-[14px] tracking-[-0.33px] text-[#9b9b9b]">Ask me anything</span>
      <Mic className="ml-auto mr-[10px] text-[#a8a8a8]" size={18} strokeWidth={1.6} />
    </div>
    {taskIcons.map(({ active, icon, open }, i) => (
      <div className={`flex w-[46.3px] flex-col items-center ${active ? "bg-[#363636]" : ""}`} key={i}>
        <div className="flex h-[35px] items-center justify-center pt-px">{icon}</div>
        {open && <div className={`h-[2px] bg-[#8fd3de] ${active ? "w-full" : "w-[38px]"}`} />}
      </div>
    ))}
    <div className="ml-auto flex items-center gap-[7px] pr-[11px]">
      <ChevronUp size={15} strokeWidth={2} />
      <Icon height={16} width={16}>
        <path d="M1.500 3.500h12v8h-12z" stroke="#ddd" strokeWidth="1.500" />
        <circle cx="11" cy="10.500" fill="#2fa545" r="4.200" stroke="#cfe" />
        <path d="M11 8v6" stroke="#fff" />
      </Icon>
      <Icon height={15} width={15}>
        <path d="M1 14C1 6 6 1 14 1M4.500 14c0-5.500 4-9.500 9.500-9.500M8 14c0-3.500 2.500-6 6-6" stroke="#eee" strokeWidth="1.300" />
        <path d="M11 11h3v3h-3z" fill="#eee" />
      </Icon>
      <Volume2 size={17} strokeWidth={1.7} />
      <Icon height={18} width={16}>
        <path d="M0 1h16v12h-5l-3 4-3-4H0z" fill="#fff" />
        <path d="M3 5h10M3 8.500h10" stroke="#222" strokeWidth="1.300" />
      </Icon>
      <Icon height={14} width={22}>
        <path d="M.800.800h20.400v12.400H.800z" stroke="#fff" strokeWidth="1.300" />
        <path d="M3 4h16M3 7h16" stroke="#fff" strokeDasharray="2 1" strokeWidth="1.500" />
        <path d="M5 10.300h12" stroke="#fff" strokeWidth="1.500" />
      </Icon>
      <div className="ml-[8px] w-[52px] whitespace-nowrap text-center text-[12px] leading-[16px] tracking-[-0.6px]">
        <p>4:57 PM</p>
        <p>28-Sep-17</p>
      </div>
    </div>
  </div>
);

const App = () => {
  return (
    <div className="flex h-[720px] w-[1280px] flex-col overflow-hidden bg-[#f0f0f0] font-['Open_Sans',sans-serif] text-[11.5px] leading-none tracking-[-0.2px] text-[#1a1a1a]">
      <TitleBar />
      <MenuBar />
      <ToolBars />
      <div className="flex h-[528px]">
        <LeftPanel />
        <div className="flex w-[1020px] flex-col">
          <ContextBar />
          <div className="flex">
            <ToolBox />
            <Viewport />
          </div>
          <PromptBar />
        </div>
        <ViewsStrip />
      </div>
      <MessageArea />
      <TaskBar />
    </div>
  );
};

export default App;
